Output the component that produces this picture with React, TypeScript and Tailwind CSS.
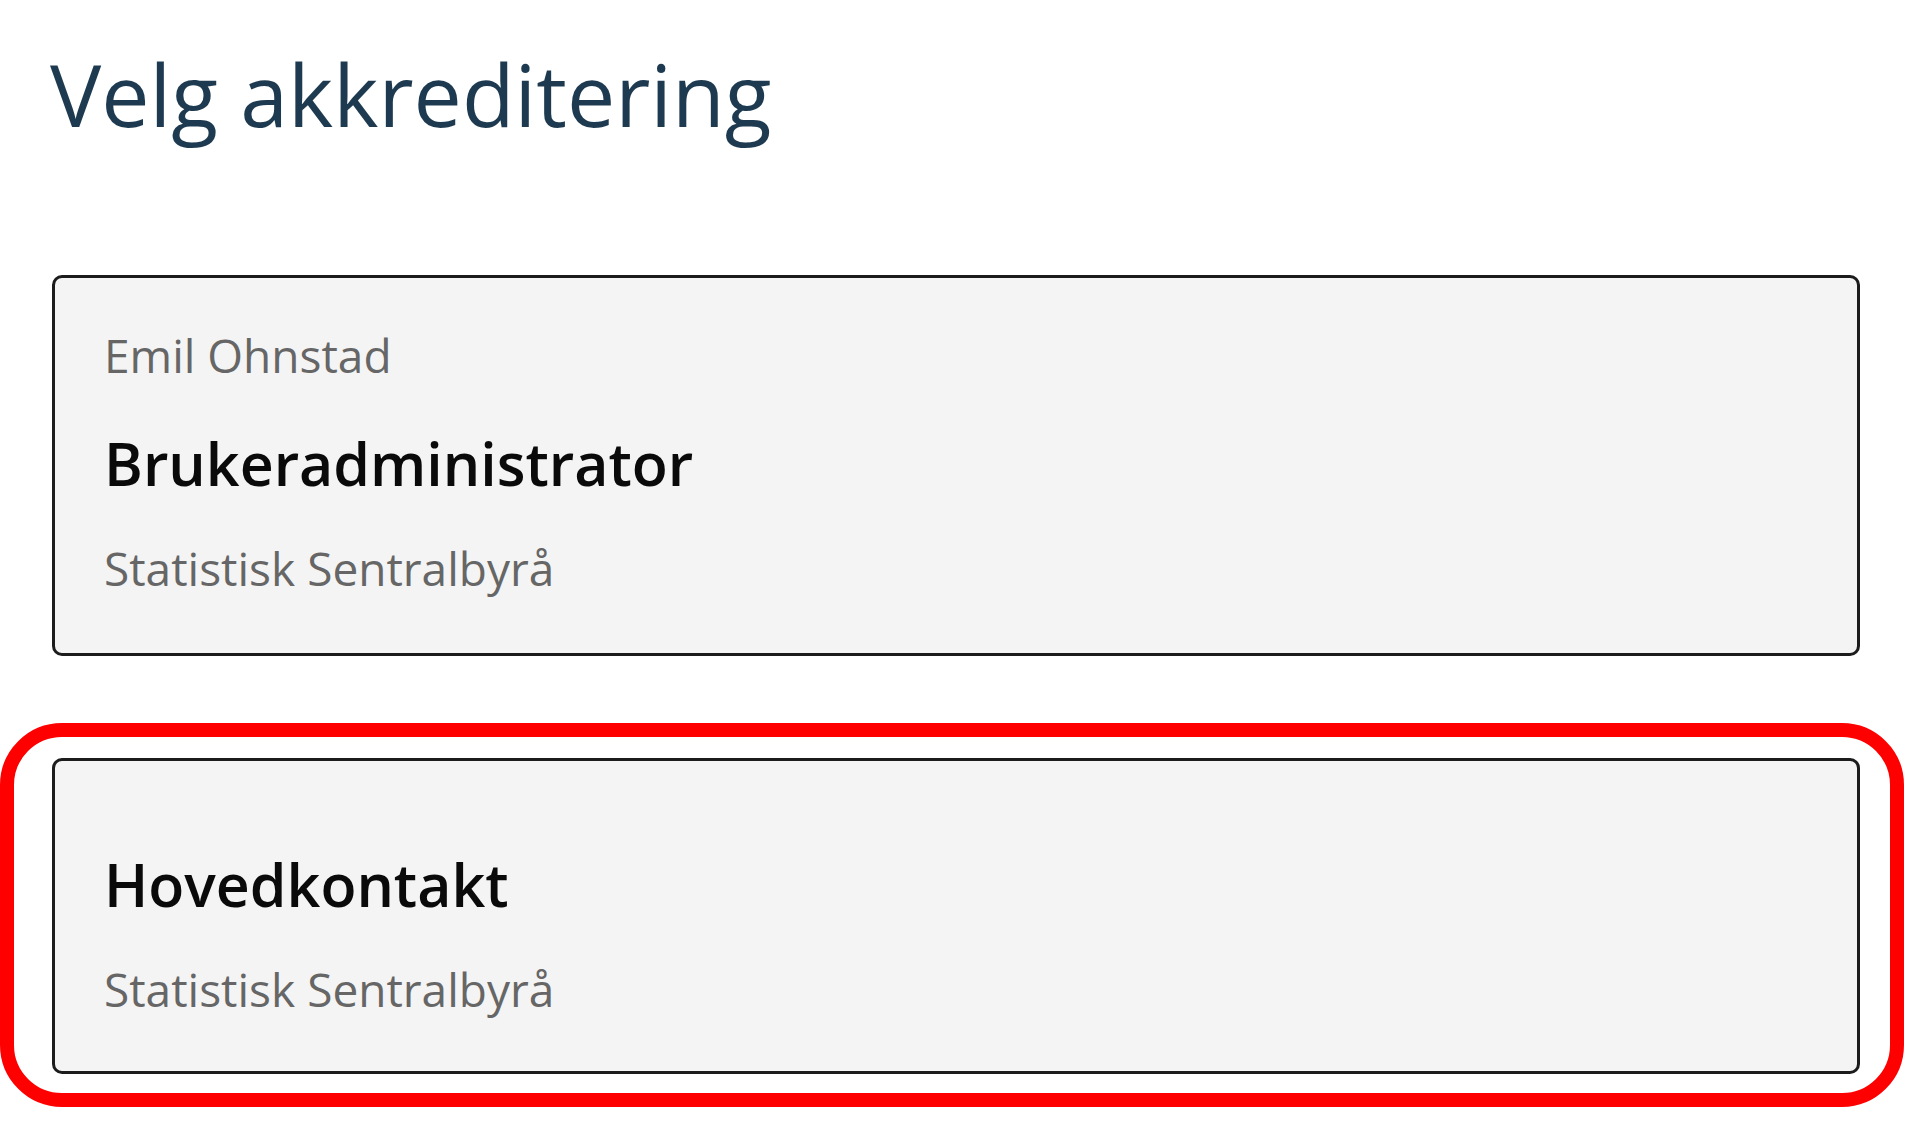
import React from 'react';

type Akkreditering = {
    navn?: string;
    rolle: string;
    organisasjon: string;
};

const akkrediteringer: Akkreditering[] = [
    { navn: 'Emil Ohnstad', rolle: 'Brukeradministrator', organisasjon: 'Statistisk Sentralbyrå' },
    { rolle: 'Hovedkontakt', organisasjon: 'Statistisk Sentralbyrå' },
];

const Kort: React.FC<{ item: Akkreditering }> = ({ item }) => (
    <button
        type="button"
        className={`block w-[1808px] text-left bg-[#f4f4f4] border-[3px] border-[#1c1c1c] rounded-[10px] pl-[49px] ${item.navn ? 'pt-[54px] pb-[62px]' : 'pt-[94px] pb-[59px]'}`}
    >
        {item.navn && (
            <p className="text-[46px] leading-none font-medium text-[#666666] mb-[56px]">{item.navn}</p>
        )}
        <p className="text-[59px] leading-none font-semibold text-[#0a0a0a]">{item.rolle}</p>
        <p className="text-[46px] leading-none font-medium text-[#666666] mt-[52px]">{item.organisasjon}</p>
    </button>
);

const App: React.FC = () => {
    return (
        <div className="min-h-screen bg-white font-['Open_Sans',sans-serif] pb-10">
            {/* Tittel */}
            <h1 className="ml-[50px] pt-[51px] text-[86px] leading-none font-normal text-[#1d3a50]">
                Velg akkreditering
            </h1>

            <div className="mt-[138px] ml-[52px]">
                <Kort item={akkrediteringer[0]} />
            </div>

            {/* Markert kort */}
            <div className="mt-[67px] w-[1904px] border-[14px] border-[#ff0000] rounded-[62px] pl-[38px] pr-[30px] pt-[21px] pb-[19px]">
                <Kort item={akkrediteringer[1]} />
            </div>
        </div>
    );
};

export default App;
